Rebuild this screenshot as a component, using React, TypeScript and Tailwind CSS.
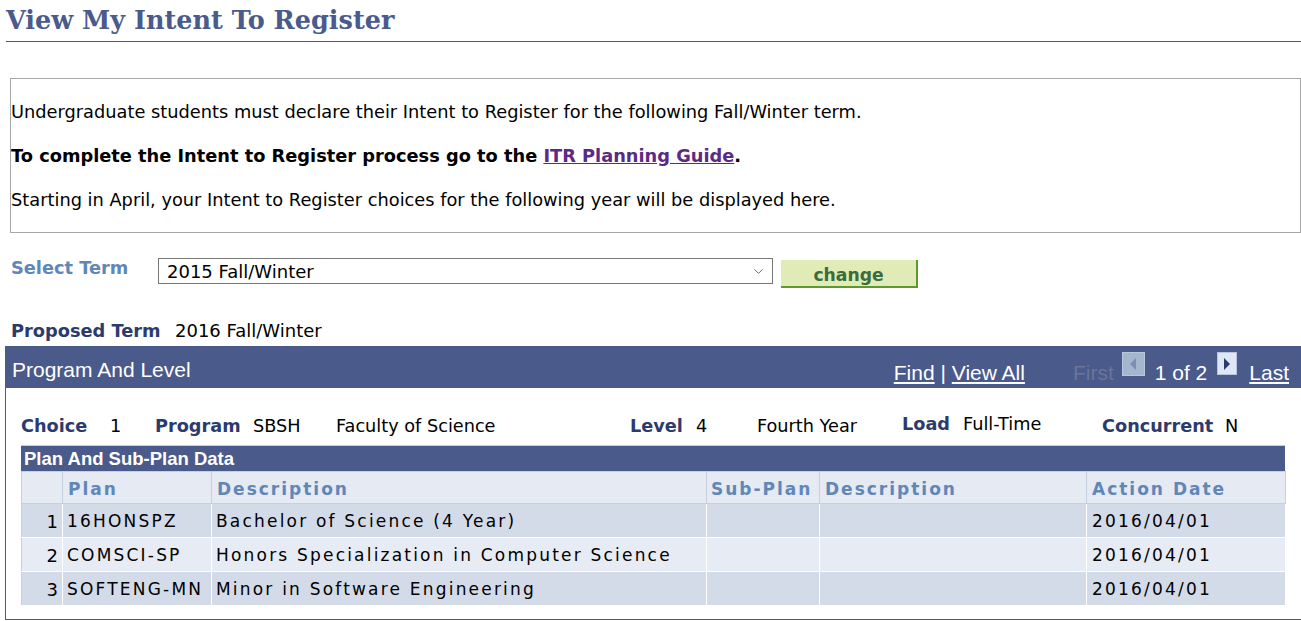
import { ChevronDown } from 'lucide-react'

const rows = [
  { n: 1, plan: '16HONSPZ', desc: 'Bachelor of Science (4 Year)', date: '2016/04/01' },
  { n: 2, plan: 'COMSCI-SP', desc: 'Honors Specialization in Computer Science', date: '2016/04/01' },
  { n: 3, plan: 'SOFTENG-MN', desc: 'Minor in Software Engineering', date: '2016/04/01' },
]

function Label({ children, w, up }: { children: React.ReactNode; w: string; up?: boolean }) {
  return <span className={`${w} shrink-0 font-bold text-[#2c3b6e] ${up ? '-mt-[2px]' : ''}`}>{children}</span>
}

function Value({ children, w, up }: { children: React.ReactNode; w: string; up?: boolean }) {
  return <span className={`${w} shrink-0 text-black ${up ? '-mt-[2px]' : ''}`}>{children}</span>
}

export default function App() {
  return (
    <div className="w-[1301px] h-[621px] overflow-hidden bg-white font-['DejaVu_Sans',sans-serif] text-black">
      {/* title */}
      <div className="ml-[6px] h-[42px] pt-[4px] border-b border-[#4a5a8c]">
        <h1 className="font-['DejaVu_Serif',serif] text-[25.5px] leading-[32px] font-bold text-[#4a5a8c]">
          View My Intent To Register
        </h1>
      </div>

      {/* info box */}
      <div className="mt-[36px] ml-[10px] w-[1291px] border border-[#a8a8a8] pt-[22px] pb-[21px] text-[17.8px] leading-[22px] flex flex-col gap-[22px]">
        <p>Undergraduate students must declare their Intent to Register for the following Fall/Winter term.</p>
        <p className="font-bold">
          To complete the Intent to Register process go to the{' '}
          <a className="underline text-[#5b2a86]" href="#">ITR Planning Guide</a>.
        </p>
        <p>Starting in April, your Intent to Register choices for the following year will be displayed here.</p>
      </div>

      {/* select term */}
      <div className="mt-[25px] flex items-start">
        <span className="ml-[11px] w-[147px] text-[17.8px] leading-[20px] font-bold text-[#5f87b7]">Select Term</span>
        <div className="w-[615px] h-[26px] border border-[#777] flex items-center justify-between pl-[8px] pr-[6px] text-[18px]">
          <span>2015 Fall/Winter</span>
          <ChevronDown size={15} strokeWidth={1.25} className="text-[#444]" />
        </div>
        <button className="ml-[8px] mt-[2px] w-[137px] h-[28px] pt-[3px] bg-[#e0ebb8] border-r-2 border-b-2 border-[#5c9a2c] text-[17.2px] leading-[22px] font-bold text-[#3c6b3c]">
          change
        </button>
      </div>

      {/* proposed term */}
      <div className="mt-[32px] ml-[11px] flex text-[17.8px] leading-[22px]">
        <span className="w-[164px] font-bold text-[#2c3b6e]">Proposed Term</span>
        <span className="text-[18px]">2016 Fall/Winter</span>
      </div>

      {/* panel */}
      <div className="mt-[4px] ml-[5px] w-[1296px] border-l border-b border-[#4a5a8c]">
        <div className="h-[42px] bg-[#4a5a8a] flex items-start justify-between pl-[6px] pr-[12px] font-['Liberation_Sans',sans-serif] text-[21px] text-white">
          <span className="pt-[8px]">Program And Level</span>
          <div className="flex items-start pt-[5px]">
            <div className="pt-[6px]">
              <a className="underline" href="#">Find</a> | <a className="underline" href="#">View All</a>
            </div>
            <span className="ml-[48px] pt-[6px] text-[#6b7498]">First</span>
            <div className="ml-[8px] mt-[1px] w-[23px] h-[24px] bg-[#a5b7cf] border border-[#b8c8dc] flex items-center justify-center">
              <svg width="8" height="12" viewBox="0 0 8 12"><path d="M7 0 L1 6 L7 12 Z" fill="#7a90b2" /></svg>
            </div>
            <span className="ml-[10px] pt-[6px]">1 of 2</span>
            <div className="ml-[10px] mt-[1px] w-[20px] h-[23px] bg-[#dfe6f5] border border-[#b8c4dc] flex items-center justify-center">
              <svg width="8" height="12" viewBox="0 0 8 12"><path d="M1 0 L7 6 L1 12 Z" fill="#2c3b6e" /></svg>
            </div>
            <a className="ml-[12px] pt-[6px] underline" href="#">Last</a>
          </div>
        </div>

        <div className="pl-[15px] pt-[27px] pb-[13px]">
          <div className="flex text-[17.7px] leading-[22px]">
            <Label w="w-[89px]">Choice</Label>
            <Value w="w-[45px]">1</Value>
            <Label w="w-[98px]">Program</Label>
            <Value w="w-[83px]">SBSH</Value>
            <Value w="w-[294px]">Faculty of Science</Value>
            <Label w="w-[66px]">Level</Label>
            <Value w="w-[61px]">4</Value>
            <Value w="w-[145px]">Fourth Year</Value>
            <Label w="w-[61px]" up>Load</Label>
            <Value w="w-[139px]" up>Full-Time</Value>
            <Label w="w-[123px]">Concurrent</Label>
            <Value w="w-[20px]">N</Value>
          </div>

          {/* grid */}
          <div className="mt-[8px] w-[1264px] border-t border-[#c4cddc]">
            <div className="h-[25px] bg-[#4a5a8a] pl-[3px] font-['Liberation_Sans',sans-serif] text-[18.5px] leading-[26px] font-bold text-white">
              Plan And Sub-Plan Data
            </div>
            <table className="w-full border-collapse table-fixed">
              <colgroup>
                <col className="w-[41px]" />
                <col className="w-[149px]" />
                <col className="w-[495px]" />
                <col className="w-[113px]" />
                <col className="w-[267px]" />
                <col className="w-[199px]" />
              </colgroup>
              <thead>
                <tr className="h-[30px] bg-[#e6eaf2] text-left text-[17px] font-bold tracking-[2px] text-[#5f87b7]">
                  <th className="border border-[#c6cfdd]"></th>
                  <th className="border border-[#c6cfdd] pl-[5px] pt-[5px] font-bold">Plan</th>
                  <th className="border border-[#c6cfdd] pl-[5px] pt-[5px] font-bold">Description</th>
                  <th className="border border-[#c6cfdd] pl-[4px] pt-[5px] font-bold">Sub-Plan</th>
                  <th className="border border-[#c6cfdd] pl-[5px] pt-[5px] font-bold">Description</th>
                  <th className="border border-[#c6cfdd] pl-[5px] pt-[5px] font-bold">Action Date</th>
                </tr>
              </thead>
              <tbody className="text-[17px] tracking-[2.2px]">
                {rows.map((r) => (
                  <tr key={r.n} className={`h-[34px] ${r.n % 2 === 1 ? 'bg-[#d4dbe8]' : 'bg-[#e7ebf3]'}`}>
                    <td className="border border-white border-l-[#c6cfdd] text-right pr-[4px] pt-[3px] text-[18px] tracking-normal">{r.n}</td>
                    <td className="border border-white pl-[4px] pt-[3px]">{r.plan}</td>
                    <td className="border border-white pl-[4px] pt-[3px]">{r.desc}</td>
                    <td className="border border-white"></td>
                    <td className="border border-white"></td>
                    <td className="border border-white pl-[5px] pt-[3px]">{r.date}</td>
                  </tr>
                ))}
              </tbody>
            </table>
          </div>
        </div>
      </div>
    </div>
  )
}
